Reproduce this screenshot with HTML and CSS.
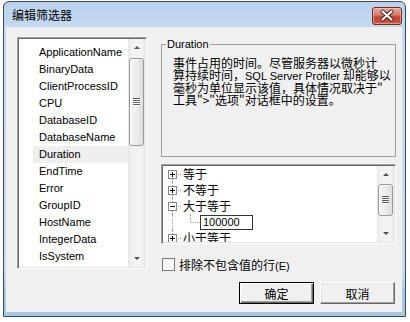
FILE: index.html
```html
<!DOCTYPE html>
<html lang="zh">
<head>
    <meta charset="UTF-8" />
    <title>编辑筛选器</title>
    <link rel="stylesheet" href="styles.css">
</head>
<body>
    <div class="window">
        <div class="titlebar">
            <span class="title">编辑筛选器</span>
            <button class="close">
                <svg width="28" height="16" viewBox="0 0 28 16">
                    <path d="M9.5 3.5 L18.5 11.5 M18.5 3.5 L9.5 11.5" stroke="#4a1a14" stroke-width="4" stroke-linecap="round"/>
                    <path d="M9.5 3.5 L18.5 11.5 M18.5 3.5 L9.5 11.5" stroke="#fff" stroke-width="2.2" stroke-linecap="round"/>
                </svg>
            </button>
        </div>
        <div class="client">
            <div class="listbox">
                <ul class="items">
                    <li>ApplicationName</li>
                    <li>BinaryData</li>
                    <li>ClientProcessID</li>
                    <li>CPU</li>
                    <li>DatabaseID</li>
                    <li>DatabaseName</li>
                    <li class="sel">Duration</li>
                    <li>EndTime</li>
                    <li>Error</li>
                    <li>GroupID</li>
                    <li>HostName</li>
                    <li>IntegerData</li>
                    <li>IsSystem</li>
                </ul>
                <div class="vscroll">
                    <div class="arrow up"></div>
                    <div class="track"><div class="thumb list-thumb"><span class="grip"></span></div></div>
                    <div class="arrow down"></div>
                </div>
            </div>

            <div class="side">
                <fieldset class="group">
                    <legend>Duration</legend>
                    <p>事件占用的时间。尽管服务器以微秒计<br>算持续时间，<span class="latin">SQL Server Profiler</span> 却能够以<br>毫秒为单位显示该值，具体情况取决于"<br>工具"&gt;"选项"对话框中的设置。</p>
                </fieldset>

                <div class="tree">
                    <div class="tree-body">
                        <div class="node first">
                            <span class="gutter"><svg class="exp" width="9" height="9"><rect x=".5" y=".5" width="8" height="8" fill="#fff" stroke="#8a8a8a"/><path d="M2 4.5h5M4.5 2v5" stroke="#000"/></svg></span>
                            <span class="label">等于</span>
                        </div>
                        <div class="node">
                            <span class="gutter"><svg class="exp" width="9" height="9"><rect x=".5" y=".5" width="8" height="8" fill="#fff" stroke="#8a8a8a"/><path d="M2 4.5h5M4.5 2v5" stroke="#000"/></svg></span>
                            <span class="label">不等于</span>
                        </div>
                        <div class="node">
                            <span class="gutter"><svg class="exp" width="9" height="9"><rect x=".5" y=".5" width="8" height="8" fill="#fff" stroke="#8a8a8a"/><path d="M2 4.5h5" stroke="#000"/></svg></span>
                            <span class="label">大于等于</span>
                        </div>
                        <div class="node child">
                            <span class="gutter pass"></span>
                            <span class="gutter leaf"></span>
                            <span class="edit">100000</span>
                        </div>
                        <div class="node">
                            <span class="gutter"><svg class="exp" width="9" height="9"><rect x=".5" y=".5" width="8" height="8" fill="#fff" stroke="#8a8a8a"/><path d="M2 4.5h5M4.5 2v5" stroke="#000"/></svg></span>
                            <span class="label">小于等于</span>
                        </div>
                    </div>
                    <div class="vscroll">
                        <div class="arrow up"></div>
                        <div class="track"><div class="thumb tree-thumb"><span class="grip"></span></div></div>
                        <div class="arrow down"></div>
                    </div>
                </div>

                <label class="check">
                    <span class="box"></span>
                    <span>排除不包含值的行<span class="latin">(E)</span></span>
                </label>

                <div class="buttons">
                    <button class="btn default">确定</button>
                    <button class="btn">取消</button>
                </div>
            </div>
        </div>
    </div>
</body>
</html>
```

FILE: styles.css
```css
body {
    margin: 0;
    background: #fff;
    color: #000;
    font-family: "Liberation Sans", "Noto Sans CJK SC", sans-serif;
    font-size: 12px;
}
.window {
    margin: 1px 0 0 3px;
    width: 403px;
    height: 316px;
    box-sizing: border-box;
    border: 1px solid #3e4855;
    border-radius: 6px 6px 0 0;
    background: linear-gradient(#bad1ec, #c4d9f1 25px, #cadcf2 270px, #a6c8e5 290px);
    padding: 0 3px 4px 2px;
    display: flex;
    flex-direction: column;
}
.titlebar {
    height: 25px;
    flex: none;
    display: flex;
    justify-content: space-between;
    align-items: flex-start;
    padding-left: 6px;
}
.title {
    margin-top: 5px;
    line-height: 16px;
    font-family: "Noto Sans CJK SC", sans-serif;
    font-size: 12px;
}
.close {
    margin-top: 5px;
    width: 30px;
    height: 18px;
    padding: 0;
    border: 1px solid #6e2b22;
    border-radius: 3px;
    background: linear-gradient(#e9a99a, #d7776a 45%, #c3412f 55%, #c85a40);
    box-shadow: inset 0 0 0 1px rgba(255, 210, 200, 0.5);
    display: flex;
    align-items: center;
    justify-content: center;
}
.client {
    flex: 1;
    background: #f0f0f0;
    display: flex;
    gap: 14px;
    padding: 10px 0 0 11px;
}

/* list of columns */
.listbox {
    width: 130px;
    height: 232px;
    box-sizing: border-box;
    background: #fff;
    border: 1px solid;
    border-color: #a0a0a0 #fff #fff #a0a0a0;
    box-shadow: inset 1px 1px #696969, inset -1px -1px #e3e3e3;
    padding: 1px;
    display: flex;
}
.items {
    flex: 1;
    list-style: none;
    margin: 0;
    padding: 5px 0 0 14px;
    font-size: 11px;
}
.items li {
    height: 17px;
    line-height: 17px;
    padding-left: 6px;
}
.items li.sel {
    background: #efefef;
}

/* scrollbars */
.vscroll {
    width: 17px;
    flex: none;
    display: flex;
    flex-direction: column;
    background: linear-gradient(to right, #e6e6e6, #f1f1f1 3px, #f4f4f4 13px, #eaeaea);
}
.arrow {
    height: 17px;
    flex: none;
    display: flex;
    align-items: center;
    justify-content: center;
}
.arrow::after {
    content: "";
    border-left: 3px solid transparent;
    border-right: 3px solid transparent;
}
.arrow.up::after {
    border-bottom: 3px solid #505050;
}
.arrow.down::after {
    border-top: 3px solid #505050;
}
.track {
    flex: 1;
    padding: 0 1px;
}
.thumb {
    box-sizing: border-box;
    border: 1px solid #989898;
    border-radius: 3px;
    background: linear-gradient(to right, #f5f5f5, #ececec 50%, #dcdcdc);
    box-shadow: inset 1px 1px #fff;
    display: flex;
    align-items: center;
    justify-content: center;
}
.list-thumb {
    margin-top: 2px;
    height: 88px;
}
.tree-thumb {
    margin-top: 1px;
    height: 32px;
}
.grip {
    width: 7px;
    height: 8px;
    background: repeating-linear-gradient(#5c5c5c 0 1px, #fdfdfd 1px 2px);
}

/* right side */
.side {
    width: 235px;
    margin-top: 1px;
    display: flex;
    flex-direction: column;
}
.group {
    margin: 0;
    height: 119px;
    box-sizing: border-box;
    padding: 0 6px 0 4px;
    border: 1px solid #a0a0a0;
    min-width: 0;
}
.group legend {
    padding: 0 1px;
    font-size: 11px;
    line-height: 13px;
}
.group p {
    margin: 6px 0 0 7px;
    font-family: "Noto Sans CJK SC", sans-serif;
    font-size: 12px;
    line-height: 11.7px;
    white-space: nowrap;
}
.latin {
    font-family: "Liberation Sans", sans-serif;
    font-size: 11px;
}

/* condition tree */
.tree {
    margin-top: 7px;
    height: 80px;
    box-sizing: border-box;
    background: #fff;
    border: 1px solid;
    border-color: #a0a0a0 #fff #fff #a0a0a0;
    box-shadow: inset 1px 1px #696969, inset -1px -1px #e3e3e3;
    padding: 1px;
    display: flex;
    overflow: hidden;
}
.tree-body {
    flex: 1;
    overflow: hidden;
    font-family: "Noto Sans CJK SC", sans-serif;
    font-size: 12px;
}
.node {
    height: 16px;
    display: flex;
    align-items: center;
}
.gutter {
    position: relative;
    width: 18px;
    height: 16px;
    flex: none;
    display: flex;
    align-items: center;
    justify-content: center;
}
.gutter::before {
    content: "";
    position: absolute;
    left: 9px;
    top: 0;
    bottom: 0;
    border-left: 1px dotted #a0a0a0;
}
.node.first .gutter::before {
    top: 8px;
}
.gutter::after {
    content: "";
    position: absolute;
    left: 13px;
    right: 0;
    top: 8px;
    border-top: 1px dotted #a0a0a0;
}
.gutter.pass::after {
    display: none;
}
.gutter.leaf {
    width: 19px;
}
.gutter.leaf::before {
    bottom: 8px;
}
.gutter.leaf::after {
    left: 10px;
}
.exp {
    position: relative;
    z-index: 1;
    margin-left: 1px;
}
.label {
    margin-left: 2px;
    line-height: 16px;
}
.edit {
    width: 53px;
    height: 15px;
    box-sizing: border-box;
    border: 1px solid #333;
    padding-left: 2px;
    font-family: "Liberation Sans", sans-serif;
    font-size: 11px;
    line-height: 13px;
}

/* checkbox and buttons */
.check {
    margin: 14px 0 0 1px;
    display: flex;
    align-items: center;
    gap: 4px;
    height: 13px;
    font-family: "Noto Sans CJK SC", sans-serif;
    font-size: 12px;
}
.check .box {
    width: 13px;
    height: 13px;
    box-sizing: border-box;
    border: 1px solid #7a7a7a;
    background: linear-gradient(135deg, #ececec, #fff);
}
.buttons {
    margin-top: 11px;
    display: flex;
    justify-content: flex-end;
    gap: 6px;
    padding-right: 1px;
}
.btn {
    width: 75px;
    height: 22px;
    padding: 0;
    background: #f0f0f0;
    border: 1px solid;
    border-color: #fff #696969 #696969 #fff;
    box-shadow: inset -1px -1px #a0a0a0, inset 1px 1px #e3e3e3;
    font-family: "Noto Sans CJK SC", sans-serif;
    font-size: 12px;
    color: #000;
}
.btn.default {
    border-color: #000;
    box-shadow: inset 1px 1px #fff, inset -1px -1px #696969, inset -2px -2px #a0a0a0;
}
```
